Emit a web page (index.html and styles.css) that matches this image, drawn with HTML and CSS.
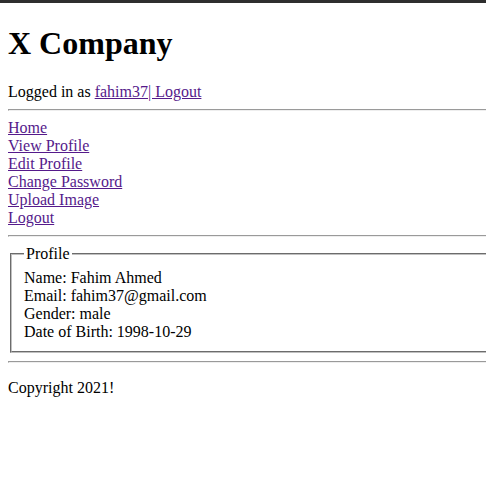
FILE: index.html
```html
<!DOCTYPE html>
<html>
<head>
<meta charset="utf-8">
<title>X Company</title>
<link rel="stylesheet" href="styles.css">
</head>
<body>
<div class="topbar"></div>
<div class="page">
  <h1 class="brand">X Company</h1>
  <p class="login">Logged in as <a href="#">fahim37</a><a href="#">| Logout</a></p>
  <hr class="rule">
  <nav class="menu">
    <a href="#">Home</a>
    <a href="#">View Profile</a>
    <a href="#">Edit Profile</a>
    <a href="#">Change Password</a>
    <a href="#">Upload Image</a>
    <a href="#">Logout</a>
  </nav>
  <hr class="rule">
  <fieldset class="profile">
    <legend class="profile-title">Profile</legend>
    <div class="row">Name: Fahim Ahmed</div>
    <div class="row">Email: fahim37@gmail.com</div>
    <div class="row">Gender: male</div>
    <div class="row">Date of Birth: 1998-10-29</div>
  </fieldset>
  <hr class="rule">
  <p class="footer">Copyright 2021!</p>
</div>
</body>
</html>
```
FILE: styles.css
```css
html {
  overflow: hidden;
}
body {
  margin: 0;
  font-family: "Liberation Serif", "Times New Roman", serif;
  font-size: 16px;
  color: #000;
  background: #fff;
}
.topbar {
  height: 3px;
  background: #2e2e2e;
}
.page {
  width: 520px;
  padding: 0 8px 8px;
  box-sizing: border-box;
  display: flow-root;
}
.brand {
  font-size: 32px;
  font-weight: bold;
  margin: 21.5px 0 21.44px;
}
.login {
  margin: 0;
}
a {
  color: #551a8b;
  text-decoration: underline;
}
.rule {
  margin: 8px 0;
  border-style: solid;
  border-width: 1px;
  border-color: #9a9a9a #eeeeee #eeeeee #9a9a9a;
  height: 0;
}
.menu {
  display: flex;
  flex-direction: column;
  align-items: flex-start;
}
.profile {
  margin: 0 2px;
  padding: 5.6px 12px 10px;
  border: 2px groove #c0c0c0;
}
.profile-title {
  padding: 0 2px;
}
.footer {
  margin: 16px 0;
}
```
